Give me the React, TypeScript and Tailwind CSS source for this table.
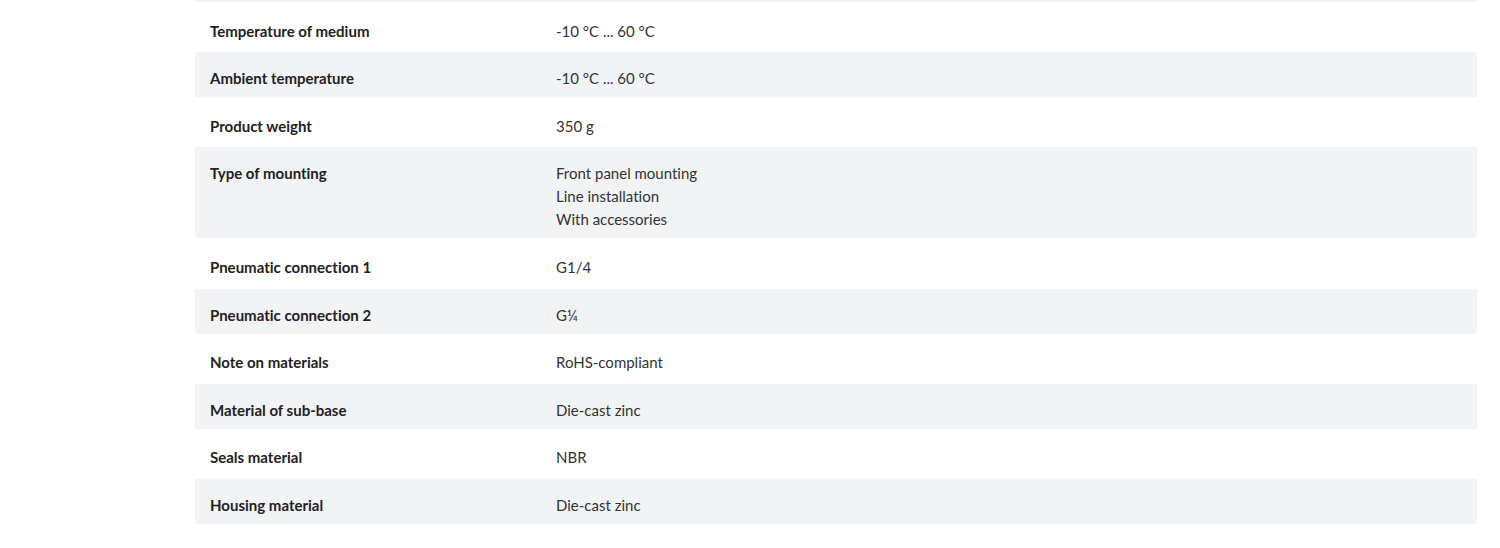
const rows: { label: string; values: string[] }[] = [
  { label: "Temperature of medium", values: ["-10 °C ... 60 °C"] },
  { label: "Ambient temperature", values: ["-10 °C ... 60 °C"] },
  { label: "Product weight", values: ["350 g"] },
  {
    label: "Type of mounting",
    values: ["Front panel mounting", "Line installation", "With accessories"],
  },
  { label: "Pneumatic connection 1", values: ["G1/4"] },
  { label: "Pneumatic connection 2", values: ["G¼"] },
  { label: "Note on materials", values: ["RoHS-compliant"] },
  { label: "Material of sub-base", values: ["Die-cast zinc"] },
  { label: "Seals material", values: ["NBR"] },
  { label: "Housing material", values: ["Die-cast zinc"] },
];

export default function App() {
  return (
    <div className="h-[548px] w-[1500px] overflow-hidden bg-white font-['Lato',sans-serif] text-[15px] text-[#333] [font-variant-ligatures:none]">
      <div className="ml-[195px] flex w-[1282px] flex-col gap-[2.6px]">
        <div className="h-[2px] bg-[#f2f3f5]" />
        {rows.map((row, i) => (
          <div
            key={row.label}
            className={`flex pt-[15px] pb-[7px] leading-[23px] ${i % 2 === 1 ? "bg-[#f2f3f5]" : "bg-white"}`}
          >
            <div className="w-[346px] shrink-0 pl-[15px] font-bold text-[#222]">
              {row.label}
            </div>
            <div className="pl-[15px]">
              {row.values.map((v) => (
                <div key={v}>{v}</div>
              ))}
            </div>
          </div>
        ))}
      </div>
    </div>
  );
}
